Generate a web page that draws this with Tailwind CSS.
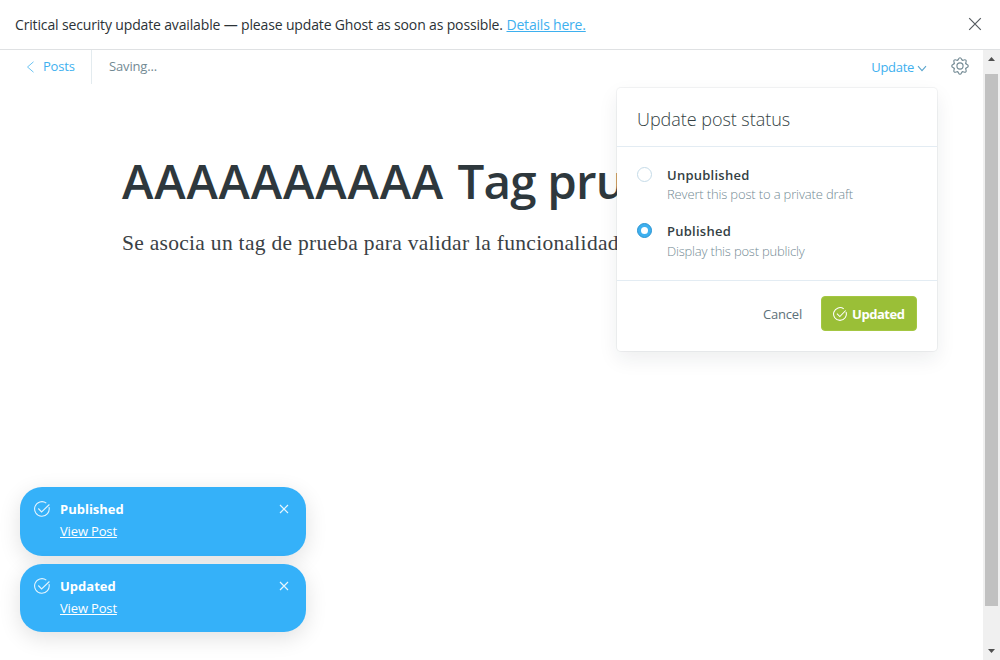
<!DOCTYPE html>
<html lang="es">
<head>
<meta charset="utf-8">
<title>Ghost editor</title>
<script src="https://cdn.jsdelivr.net/npm/@tailwindcss/browser@4"></script>
</head>
<body class="relative flex h-[660px] w-[1000px] flex-col overflow-hidden bg-white font-['Open_Sans','Noto_Sans',sans-serif] text-[13px] text-[#343f44]">
  <header class="flex h-[50px] shrink-0 items-center justify-between border-b border-[#dfe1e3] pr-[18px] pb-px pl-[15px]">
    <p class="h-5 pt-px text-[14px] leading-5 whitespace-nowrap text-[#2b3236]"><span class="tracking-[-0.15px]">Critical security update available — please update Ghost as soon as possible.</span> <a class="tracking-[-0.2px] text-[#3eb0ef] underline">Details here.</a></p>
    <svg class="size-[14px]" viewBox="0 0 14 14" fill="none" stroke="#555b60" stroke-width="1.2"><path d="M1.2 1.2l11.6 11.6M12.8 1.2L1.2 12.8"/></svg>
  </header>

  <div class="flex min-h-0 flex-1">
    <main class="min-w-0 flex-1 overflow-hidden">
      <div class="flex h-[34px] items-center">
        <a class="flex h-full w-[92px] items-center border-r border-[#e3ebef] pl-[26px] text-[#3eb0ef]">
          <svg class="mr-2 h-[12px] w-[9px]" viewBox="0 0 9 12" fill="none" stroke="#6cc4f2"><path d="M7.5 .8L1.5 6l6 5.2"/></svg>
          <span class="tracking-[-0.2px]">Posts</span>
        </a>
        <span class="ml-[17px] tracking-[-0.15px] text-[#738a94]">Saving...</span>
        <a class="ml-auto flex items-center pt-0.5 text-[#3eb0ef]">
          <span class="tracking-[-0.3px]">Update</span>
          <svg class="ml-[3px] h-[7px] w-[10px]" viewBox="0 0 10 7" fill="none" stroke="#5aa5cd" stroke-width="1.1"><path d="M1 1.2l4 4.4 4-4.4"/></svg>
        </a>
        <svg class="mr-[14px] mb-[2px] ml-6 size-[18px]" viewBox="-12 -12 24 24" fill="none" stroke="#738a94" stroke-width="1.5" stroke-linecap="round">
          <defs><path id="tooth" d="M-3.210 -7.760C-1.500 -8.500 -2.300 -11 0 -11S1.500 -8.500 3.210 -7.760"/></defs>
          <circle r="4.100"/>
          <use href="#tooth"/><use href="#tooth" transform="rotate(45)"/><use href="#tooth" transform="rotate(90)"/><use href="#tooth" transform="rotate(135)"/><use href="#tooth" transform="rotate(180)"/><use href="#tooth" transform="rotate(225)"/><use href="#tooth" transform="rotate(270)"/><use href="#tooth" transform="rotate(315)"/>
        </svg>
      </div>
      <article class="pt-[66px] pl-[122px]">
        <h1 class="h-[62px] text-[47.5px] leading-[62px] font-[560] whitespace-nowrap text-[#2e383d]"><span class="tracking-[0.8px]">AAAAAAAAAA</span> <span class="ml-px tracking-[-0.8px]">Tag pru</span></h1>
        <p class="mt-[17px] h-7 font-['Liberation_Serif',serif] text-[21.5px] leading-7 tracking-[0.29px] whitespace-nowrap text-[#3a4145]">Se asocia un tag de prueba para validar la funcionalidad</p>
      </article>
    </main>
    <div class="flex w-[17px] shrink-0 flex-col items-center bg-[#f0f0f0]">
      <svg class="h-6 w-[17px]" viewBox="0 0 17 24"><path d="M5 11h7L8.500 7z" fill="#505050"/></svg>
      <div class="h-[532px] w-[13px] bg-[#c1c1c1]"></div>
      <svg class="mt-auto h-[18px] w-[17px]" viewBox="0 0 17 18"><path d="M5 7h7l-3.500 4z" fill="#505050"/></svg>
    </div>
  </div>

  <section class="absolute top-[88px] left-[617px] h-[263px] w-[320px] rounded-[4px] bg-white shadow-[0_0_0_1px_rgba(99,114,130,0.08),0_8px_20px_rgba(27,39,51,0.08)]">
    <h2 class="flex h-[59px] items-center border-b border-[#e3ecf3] px-5 pt-1 text-[18px] font-[340] tracking-[-0.04px] whitespace-nowrap">Update post status</h2>
    <div class="flex h-[134px] flex-col gap-[18px] border-b border-[#e3ecf3] px-5 pt-[19px]">
      <div class="flex gap-[15px]">
        <span class="mt-px size-[15px] rounded-full border border-[#c5dbe8]"></span>
        <div class="whitespace-nowrap">
          <div class="h-[19px] leading-[18px] font-semibold tracking-[0.25px]">Unpublished</div>
          <div class="h-[19px] leading-[19px] font-light tracking-[-0.15px] text-[#738a94]">Revert this post to a private draft</div>
        </div>
      </div>
      <div class="flex gap-[15px]">
        <span class="mt-px flex size-[15px] items-center justify-center rounded-full border border-[#2b94d2] bg-[#3eb0ef]"><i class="size-[7px] rounded-full bg-white"></i></span>
        <div class="whitespace-nowrap">
          <div class="h-[19px] leading-[18px] font-semibold tracking-[0.25px]">Published</div>
          <div class="h-[19px] leading-[20px] font-light tracking-[-0.2px] text-[#738a94]">Display this post publicly</div>
        </div>
      </div>
    </div>
    <div class="flex items-center justify-end pt-[15px] pr-5">
      <button class="mr-[19px] pt-0.5 tracking-[-0.2px] text-[#5d7079]">Cancel</button>
      <button class="flex h-[35px] w-[96px] items-center rounded-[4px] border border-[#a4c742] bg-[#9abf37] pl-[11px] font-bold text-white">
        <svg class="mr-[5px] size-[14px]" viewBox="0 0 16 16" fill="none" stroke="#fff" stroke-width="1.200"><path d="M14.900 5.700A7.300 7.300 0 1 1 12.300 2.100M4.500 7.500l3.300 3.400L14.500 4"/></svg>
        <span class="pt-0.5 tracking-[-0.45px]">Updated</span>
      </button>
    </div>
  </section>

  <aside class="absolute top-[487px] left-5 flex w-[286px] flex-col gap-2 text-white">
    <div class="flex h-[69px] rounded-[22px] bg-[#35b1f9] pt-[12px] pr-[17px] pl-[14px] shadow-[0_6px_22px_rgba(0,0,0,0.12)]">
      <svg class="mt-[2px] mr-[10px] size-4" viewBox="0 0 16 16" fill="none" stroke="#e3f4fe" stroke-width="1.100"><path d="M15 6.200A7.300 7.300 0 1 1 12.300 2.100M4.300 7.500l3.300 3.400L15.400 3.500"/></svg>
      <div class="flex-1 whitespace-nowrap"><div class="h-[22px] leading-5 font-bold tracking-[0px]">Published</div><a class="block leading-5 tracking-[-0.15px] underline">View Post</a></div>
      <svg class="mt-[5px] size-[10px]" viewBox="0 0 10 10" stroke="#e5f5fe" stroke-width="1.200"><path d="M1 1l8 8M9 1L1 9"/></svg>
    </div>
    <div class="flex h-[68px] rounded-[22px] bg-[#35b1f9] pt-[12px] pr-[17px] pl-[14px] shadow-[0_6px_22px_rgba(0,0,0,0.12)]">
      <svg class="mt-[2px] mr-[10px] size-4" viewBox="0 0 16 16" fill="none" stroke="#e3f4fe" stroke-width="1.100"><path d="M15 6.200A7.300 7.300 0 1 1 12.300 2.100M4.300 7.500l3.300 3.400L15.400 3.500"/></svg>
      <div class="flex-1 whitespace-nowrap"><div class="h-[22px] leading-5 font-bold tracking-[0px]">Updated</div><a class="block leading-5 tracking-[-0.15px] underline">View Post</a></div>
      <svg class="mt-[5px] size-[10px]" viewBox="0 0 10 10" stroke="#e5f5fe" stroke-width="1.200"><path d="M1 1l8 8M9 1L1 9"/></svg>
    </div>
  </aside>
</body>
</html>
